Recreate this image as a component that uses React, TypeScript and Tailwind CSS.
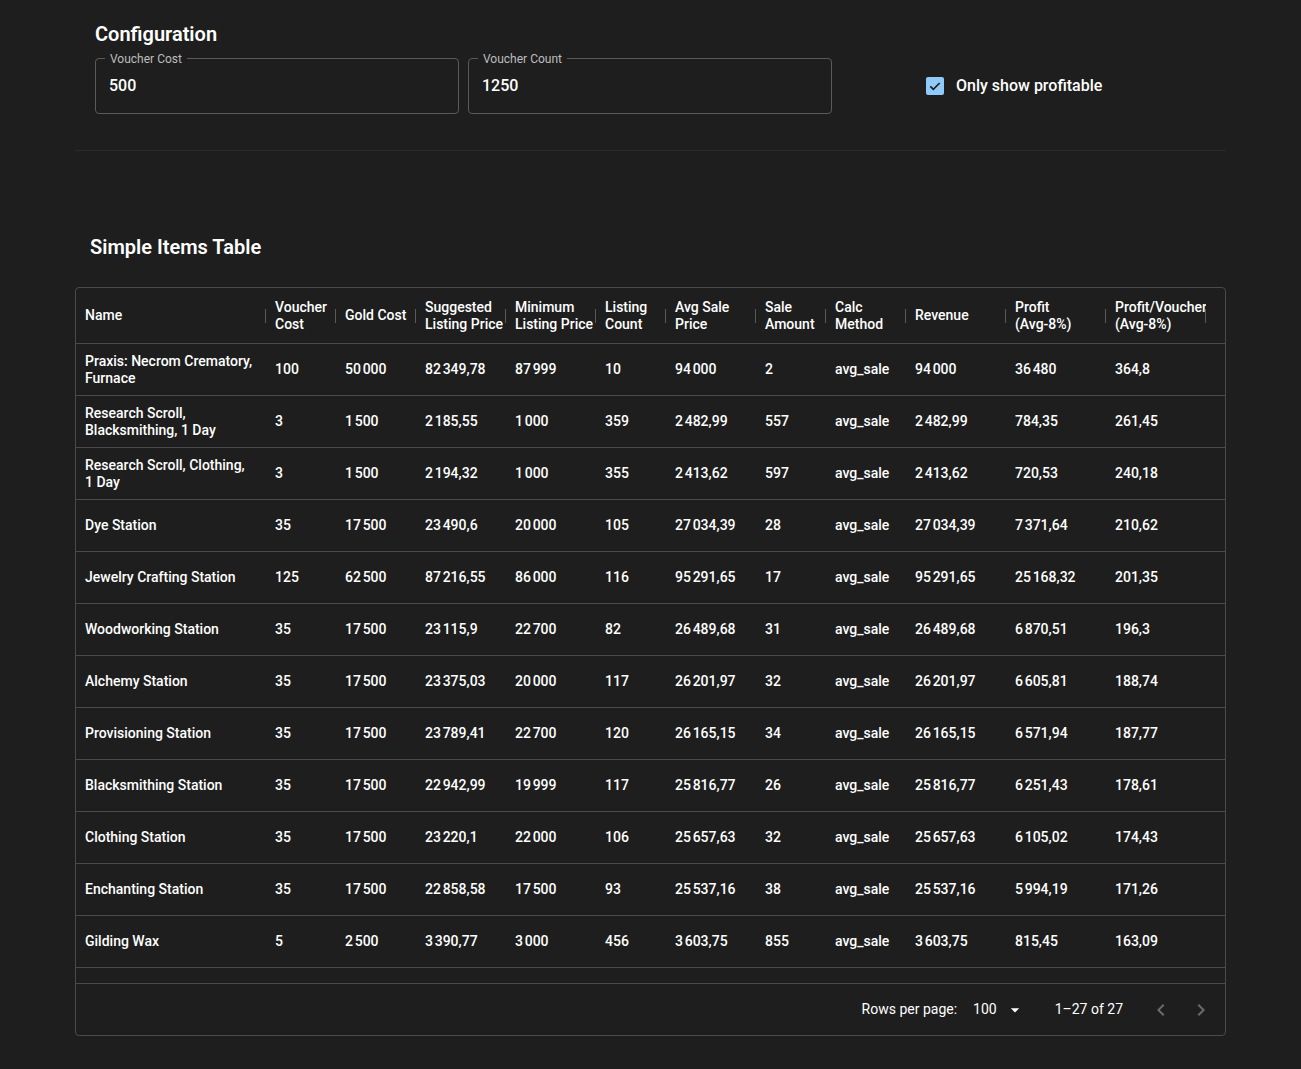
import React from "react";

const S = "\u202f";
const n = (s: string) => s.replace(/(\d)_(\d)/g, `$1${S}$2`);

const COLS = "grid-cols-[190px_70px_80px_90px_90px_70px_90px_70px_80px_100px_100px_100px_40px]";

const HEADERS = [
  ["Name"],
  ["Voucher", "Cost"],
  ["Gold Cost"],
  ["Suggested", "Listing Price"],
  ["Minimum", "Listing Price"],
  ["Listing", "Count"],
  ["Avg Sale", "Price"],
  ["Sale", "Amount"],
  ["Calc", "Method"],
  ["Revenue"],
  ["Profit", "(Avg-8%)"],
  ["Profit/Voucher", "(Avg-8%)"],
];

const ROWS: string[][] = [
  ["Praxis: Necrom Crematory, Furnace", "100", "50_000", "82_349,78", "87_999", "10", "94_000", "2", "avg_sale", "94_000", "36_480", "364,8"],
  ["Research Scroll, Blacksmithing, 1 Day", "3", "1_500", "2_185,55", "1_000", "359", "2_482,99", "557", "avg_sale", "2_482,99", "784,35", "261,45"],
  ["Research Scroll, Clothing, 1 Day", "3", "1_500", "2_194,32", "1_000", "355", "2_413,62", "597", "avg_sale", "2_413,62", "720,53", "240,18"],
  ["Dye Station", "35", "17_500", "23_490,6", "20_000", "105", "27_034,39", "28", "avg_sale", "27_034,39", "7_371,64", "210,62"],
  ["Jewelry Crafting Station", "125", "62_500", "87_216,55", "86_000", "116", "95_291,65", "17", "avg_sale", "95_291,65", "25_168,32", "201,35"],
  ["Woodworking Station", "35", "17_500", "23_115,9", "22_700", "82", "26_489,68", "31", "avg_sale", "26_489,68", "6_870,51", "196,3"],
  ["Alchemy Station", "35", "17_500", "23_375,03", "20_000", "117", "26_201,97", "32", "avg_sale", "26_201,97", "6_605,81", "188,74"],
  ["Provisioning Station", "35", "17_500", "23_789,41", "22_700", "120", "26_165,15", "34", "avg_sale", "26_165,15", "6_571,94", "187,77"],
  ["Blacksmithing Station", "35", "17_500", "22_942,99", "19_999", "117", "25_816,77", "26", "avg_sale", "25_816,77", "6_251,43", "178,61"],
  ["Clothing Station", "35", "17_500", "23_220,1", "22_000", "106", "25_657,63", "32", "avg_sale", "25_657,63", "6_105,02", "174,43"],
  ["Enchanting Station", "35", "17_500", "22_858,58", "17_500", "93", "25_537,16", "38", "avg_sale", "25_537,16", "5_994,19", "171,26"],
  ["Gilding Wax", "5", "2_500", "3_390,77", "3_000", "456", "3_603,75", "855", "avg_sale", "3_603,75", "815,45", "163,09"],
  ["Tempering Alloy", "5", "2_500", "3_301,2", "2_900", "512", "3_480,1", "902", "avg_sale", "3_480,1", "701,69", "140,34"],
  ["Dreugh Wax", "5", "2_500", "3_250,4", "2_800", "488", "3_402,55", "811", "avg_sale", "3_402,55", "630,35", "126,07"],
  ["Rosin", "5", "2_500", "3_120,9", "2_750", "402", "3_310,4", "734", "avg_sale", "3_310,4", "545,57", "109,11"],
  ["Attunable Blacksmithing Station", "60", "30_000", "34_120,5", "33_000", "44", "36_500", "12", "avg_sale", "36_500", "3_580", "59,67"],
  ["Attunable Clothing Station", "60", "30_000", "33_980,2", "32_000", "41", "36_200", "11", "avg_sale", "36_200", "3_304", "55,07"],
  ["Attunable Woodworking Station", "60", "30_000", "33_500", "32_500", "39", "35_900", "9", "avg_sale", "35_900", "3_028", "50,47"],
  ["Attunable Jewelry Station", "60", "30_000", "33_420,8", "31_999", "36", "35_700", "8", "avg_sale", "35_700", "2_844", "47,4"],
  ["Transmute Station", "40", "20_000", "22_600", "21_000", "57", "23_100", "15", "avg_sale", "23_100", "1_252", "31,3"],
  ["Research Scroll, Woodworking, 1 Day", "3", "1_500", "1_650,2", "1_400", "210", "1_720,5", "301", "avg_sale", "1_720,5", "82,86", "27,62"],
  ["Research Scroll, Jewelry, 1 Day", "3", "1_500", "1_640", "1_350", "198", "1_700", "280", "avg_sale", "1_700", "64", "21,33"],
  ["Outfit Station", "50", "25_000", "27_800", "26_500", "28", "28_000", "6", "avg_sale", "28_000", "760", "15,2"],
  ["Mundus Stone Replica", "80", "40_000", "43_200", "42_000", "19", "44_200", "4", "avg_sale", "44_200", "664", "8,3"],
  ["Alchemist's Workbench", "20", "10_000", "10_900", "10_500", "63", "11_050", "20", "avg_sale", "11_050", "166", "8,3"],
  ["Storage Chest, Secure", "100", "50_000", "54_600", "53_000", "25", "54_700", "5", "avg_sale", "54_700", "324", "3,24"],
  ["Storage Coffer, Secure", "50", "25_000", "27_300", "26_800", "31", "27_250", "7", "avg_sale", "27_250", "70", "1,4"],
];

function Field({ label, value }: { label: string; value: string }) {
  return (
    <div className="relative h-14 flex-1 rounded border border-[#5a5a5a]">
      <span className="absolute -top-[9px] left-[9px] bg-[#1e1e1e] px-[5px] text-[12px] text-[#bdbdbd]">{label}</span>
      <div className="flex h-full items-center px-[13px] text-[16px] font-medium text-white">{value}</div>
    </div>
  );
}

export default function App() {
  return (
    <div className="min-h-[1069px] bg-[#1e1e1e] text-white" style={{ fontFamily: "Roboto, 'Noto Sans', sans-serif" }}>
      <div className="mx-[75px]">
        <div className="border-b border-[#2a2a2a] px-[20px] pb-9 pt-[22px]">
          <h2 className="text-[20px] font-semibold leading-6">Configuration</h2>
          <div className="mt-3 flex items-center gap-[9px]">
            <div className="flex w-[737px] gap-[9px]">
              <Field label="Voucher Cost" value="500" />
              <Field label="Voucher Count" value="1250" />
            </div>
            <label className="ml-[85px] flex items-center gap-[12px] text-[16px] font-medium">
              <span className="flex h-[18px] w-[18px] items-center justify-center rounded-[2px] bg-[#90caf9]">
                <svg viewBox="0 0 24 24" className="h-[16px] w-[16px]" fill="none" stroke="#1e1e1e" strokeWidth="2.5">
                  <path d="M5 12.5l4.5 4.5L19 7.5" />
                </svg>
              </span>
              Only show profitable
            </label>
          </div>
        </div>

        <h2 className="mt-[84px] px-[15px] text-[20px] font-semibold leading-6">Simple Items Table</h2>

        <div className="mt-[28px] overflow-hidden rounded border border-[#4a4a4a] text-[14px] font-medium">
          <div className="overflow-hidden border-b border-[#4a4a4a] pr-[15px]">
            <div className={`grid h-[55px] w-max ${COLS}`}>
              {HEADERS.map((h, i) => (
                <div key={i} className="relative flex flex-col justify-center overflow-hidden whitespace-nowrap pl-[9px] leading-[17px]">
                  {h.map((l) => <span key={l}>{l}</span>)}
                  <span className="absolute right-0 top-1/2 h-[14px] w-px -translate-y-1/2 bg-[#5a5a5a]" />
                </div>
              ))}
            </div>
          </div>
          <div className="h-[639px] overflow-y-scroll overflow-x-hidden [&::-webkit-scrollbar]:w-[15px] [&::-webkit-scrollbar-track]:bg-[#f1f1f1] [&::-webkit-scrollbar-thumb]:rounded-full [&::-webkit-scrollbar-thumb]:border-[4px] [&::-webkit-scrollbar-thumb]:border-solid [&::-webkit-scrollbar-thumb]:border-[#f1f1f1] [&::-webkit-scrollbar-thumb]:bg-[#a8a8a8]">
            {ROWS.map((r, ri) => (
              <div key={ri} className={`grid h-[52px] w-max ${COLS} border-b border-[#4a4a4a]`}>
                {r.map((c, ci) => (
                  <div key={ci} className={`flex items-center pl-[9px] leading-[17px] ${ci === 0 ? "pr-3" : "whitespace-nowrap"}`}>
                    {n(c)}
                  </div>
                ))}
              </div>
            ))}
          </div>
          <div className="flex h-[52px] items-center justify-end border-t border-[#4a4a4a] pr-[12px] text-[14px] font-normal">
            <span>Rows per page:</span>
            <span className="ml-4 flex items-center gap-2">
              100
              <svg viewBox="0 0 24 24" className="h-5 w-5" fill="white"><path d="M7 10l5 5 5-5z" /></svg>
            </span>
            <span className="ml-[30px]">1–27 of 27</span>
            <div className="ml-[26px] flex gap-4 text-[#6b6b6b]">
              <svg viewBox="0 0 24 24" className="h-6 w-6" fill="currentColor"><path d="M15.41 7.41 14 6l-6 6 6 6 1.41-1.41L10.83 12z" /></svg>
              <svg viewBox="0 0 24 24" className="h-6 w-6" fill="currentColor"><path d="M10 6 8.59 7.41 13.17 12l-4.58 4.59L10 18l6-6z" /></svg>
            </div>
          </div>
        </div>
      </div>
    </div>
  );
}
